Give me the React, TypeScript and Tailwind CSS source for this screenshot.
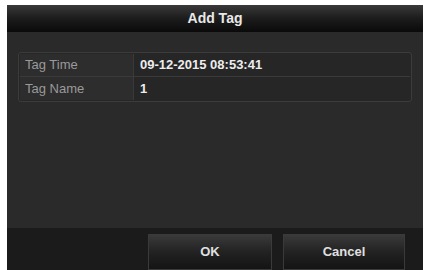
export default function App() {
  return (
    <div className="h-[270px] w-[429px] bg-white pl-[7px] pr-[6px] pt-[5px]" style={{ fontFamily: '"Liberation Sans", Arial, sans-serif' }}>
      <div className="flex h-[265px] flex-col bg-[#2a2a2a]">
        {/* header */}
        <div className="flex h-[27px] items-center justify-center bg-gradient-to-b from-[#3a3a3a] via-[#1c1c1c] to-[#0a0a0a] text-[14px] font-bold text-[#e8e8e8]">
          Add Tag
        </div>

        {/* body */}
        <div className="flex-1 px-[11px] pt-[20px]">
          <div className="rounded-[3px] border border-[#3c3c3c] bg-[#262626] p-[1px]">
            <div className="flex h-[23px] items-center border-b border-[#3a3a3a]">
              <div className="flex h-full w-[114px] items-center border-r border-[#3a3a3a] bg-[#2d2d2d] pl-[5px] text-[13px] text-[#9a9a9a]">
                Tag Time
              </div>
              <div className="pl-[6px] text-[13px] font-bold text-[#ededed]">09-12-2015 08:53:41</div>
            </div>
            <div className="flex h-[23px] items-center">
              <div className="flex h-full w-[114px] items-center border-r border-[#3a3a3a] bg-[#2d2d2d] pl-[5px] text-[13px] text-[#9a9a9a]">
                Tag Name
              </div>
              <div className="pl-[6px] text-[13px] font-bold text-[#ededed]">1</div>
            </div>
          </div>
        </div>

        {/* footer */}
        <div className="flex h-[42px] items-start justify-end gap-[11px] bg-[#1b1b1b] pr-[18px] pt-[6px]">
          <button className="h-[36px] w-[124px] border border-[#3a3a3a] bg-gradient-to-b from-[#3a3a3a] via-[#222] to-[#141414] text-[13px] font-bold text-[#e0e0e0]">
            OK
          </button>
          <button className="h-[36px] w-[122px] border border-[#3a3a3a] bg-gradient-to-b from-[#3a3a3a] via-[#222] to-[#141414] text-[13px] font-bold text-[#e0e0e0]">
            Cancel
          </button>
        </div>
      </div>
    </div>
  );
}
